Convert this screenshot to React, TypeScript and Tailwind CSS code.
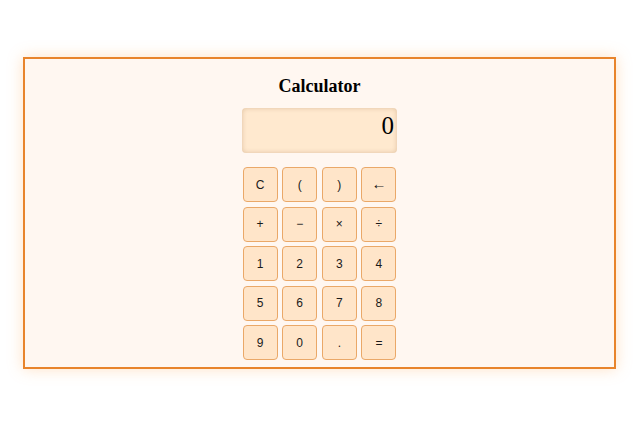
import { useState } from 'react';

const keys = ['C', '(', ')', '←', '+', '−', '×', '÷', '1', '2', '3', '4', '5', '6', '7', '8', '9', '0', '.', '='];

export default function App() {
  const [display, setDisplay] = useState('0');

  const press = (k: string) => {
    if (k === 'C') return setDisplay('0');
    if (k === '←') return setDisplay((d) => (d.length > 1 ? d.slice(0, -1) : '0'));
    if (k === '=') {
      try {
        const expr = display.replace(/×/g, '*').replace(/÷/g, '/').replace(/−/g, '-');
        // eslint-disable-next-line no-new-func
        const result = Function(`"use strict"; return (${expr})`)();
        setDisplay(String(result));
      } catch {
        setDisplay('Error');
      }
      return;
    }
    setDisplay((d) => (d === '0' || d === 'Error' ? k : d + k));
  };

  return (
    <div className="min-h-[427px] bg-white pt-[57px]">
      <div className="ml-[23px] mr-[24px] flex flex-col items-center border-2 border-[#e8842c] bg-[#fff7f1] pt-[16px] pb-[7px] shadow-[0_0_14px_rgba(255,170,90,0.35)]">
        <h1 className="h-[22px] text-[18px] leading-[22px] font-bold text-black [font-family:'Liberation_Serif',serif]">
          Calculator
        </h1>

        {/* Display */}
        <div className="mt-[11px] flex h-[45px] w-[155px] items-center justify-end rounded-[4px] bg-[#ffe9cf] pr-[3px] pb-[10px] text-[25px] text-black shadow-[inset_0_0_5px_rgba(150,100,50,0.3)] [font-family:'Liberation_Serif',serif]">
          {display}
        </div>

        {/* Keys */}
        <div className="mt-[14px] grid grid-cols-[repeat(4,35px)] auto-rows-[35px] gap-[4.6px]">
          {keys.map((k) => (
            <button
              key={k}
              onClick={() => press(k)}
              className={`flex items-center justify-center rounded-[4px] border border-[#eaa868] bg-[#ffe5c9] text-[#1a1a1a] [font-family:'Liberation_Sans',sans-serif] hover:bg-[#ffd9b0] ${
                k === '←' ? 'text-[15px]' : 'text-[12px]'
              }`}
            >
              {k}
            </button>
          ))}
        </div>
      </div>
    </div>
  );
}
